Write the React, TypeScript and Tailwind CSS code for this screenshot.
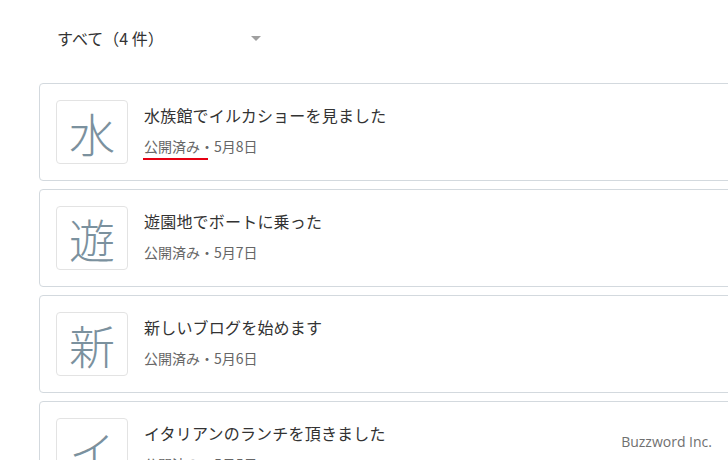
import React from "react";

const posts = [
  { ch: "水", title: "水族館でイルカショーを見ました", date: "5月8日", mark: true },
  { ch: "遊", title: "遊園地でボートに乗った", date: "5月7日" },
  { ch: "新", title: "新しいブログを始めます", date: "5月6日" },
  { ch: "イ", title: "イタリアンのランチを頂きました", date: "5月5日" },
];

export default function App() {
  return (
    <div
      className="relative w-[728px] h-[460px] overflow-hidden bg-white"
      style={{ fontFamily: '"Noto Sans CJK JP", "Noto Sans", sans-serif' }}
    >
      <div className="flex items-center h-[20px] mt-[28px] ml-[57px] w-[210px] justify-between">
        <span className="text-[16px] leading-[20px] text-[#333]">すべて（4 件）</span>
        <span className="w-0 h-0 border-l-[5px] border-r-[5px] border-t-[5px] border-l-transparent border-r-transparent border-t-[#a0a0a0] mr-[6px]" />
      </div>
      <div className="flex flex-col gap-[8px] mt-[35px] ml-[39px] w-[720px]">
        {posts.map((p) => (
          <div
            key={p.ch}
            className="flex border border-[#d3d9de] rounded-[4px] p-[16px] h-[98px] shrink-0"
          >
            <div className="w-[72px] h-[64px] shrink-0 border border-[#e3e3e3] rounded-[4px] flex items-center justify-center text-[46px] leading-none font-light text-[#7b919e]">
              {p.ch}
            </div>
            <div className="ml-[16px] flex flex-col">
              <div className="text-[16px] leading-[22px] text-[#333] mt-[4px] tracking-[0.2px]">{p.title}</div>
              <div className="relative text-[14px] leading-[20px] text-[#666] mt-[10px]">
                公開済み・{p.date}
                {p.mark && (
                  <span className="absolute left-[-1px] top-[22px] w-[65px] h-[2px] bg-[#e60012]" />
                )}
              </div>
            </div>
          </div>
        ))}
      </div>
      <div
        className="absolute right-[16px] top-[432px] text-[14px] leading-[20px] text-[#707070]"
        style={{ fontFamily: '"Open Sans", "Noto Sans", sans-serif' }}
      >
        Buzzword Inc.
      </div>
    </div>
  );
}
